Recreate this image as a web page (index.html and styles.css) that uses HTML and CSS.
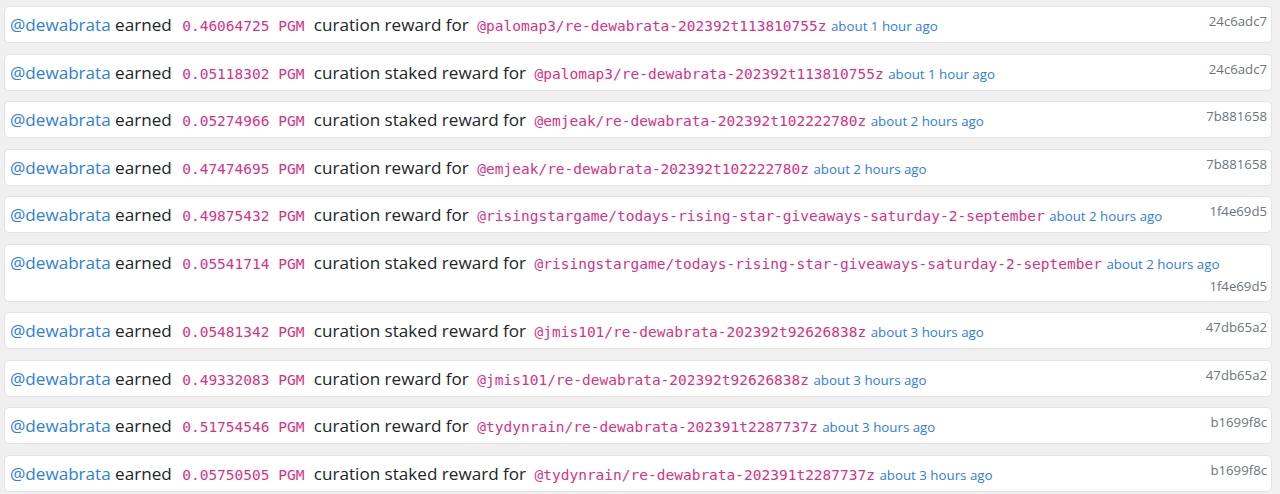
FILE: index.html
```html
<!DOCTYPE html>
<html lang="en">
<head>
  <meta charset="UTF-8">
  <title>dewabrata - curation rewards</title>
  <link rel="stylesheet" href="styles.css">
</head>
<body>
  <!-- 보상 내역 리스트 -->
  <div class="feed">
    <div class="op"><a class="acct" href="#">@dewabrata</a> earned <code class="amt">0.46064725 PGM</code> curation reward for <a class="plink" href="#"><code>@palomap3/re-dewabrata-202392t113810755z</code></a> <a class="ago" href="#">about 1 hour ago</a><span class="trx">24c6adc7</span></div>
    <div class="op"><a class="acct" href="#">@dewabrata</a> earned <code class="amt">0.05118302 PGM</code> curation staked reward for <a class="plink" href="#"><code>@palomap3/re-dewabrata-202392t113810755z</code></a> <a class="ago" href="#">about 1 hour ago</a><span class="trx">24c6adc7</span></div>
    <div class="op"><a class="acct" href="#">@dewabrata</a> earned <code class="amt">0.05274966 PGM</code> curation staked reward for <a class="plink" href="#"><code>@emjeak/re-dewabrata-202392t102222780z</code></a> <a class="ago" href="#">about 2 hours ago</a><span class="trx">7b881658</span></div>
    <div class="op"><a class="acct" href="#">@dewabrata</a> earned <code class="amt">0.47474695 PGM</code> curation reward for <a class="plink" href="#"><code>@emjeak/re-dewabrata-202392t102222780z</code></a> <a class="ago" href="#">about 2 hours ago</a><span class="trx">7b881658</span></div>
    <div class="op"><a class="acct" href="#">@dewabrata</a> earned <code class="amt">0.49875432 PGM</code> curation reward for <a class="plink" href="#"><code>@risingstargame/todays-rising-star-giveaways-saturday-2-september</code></a> <a class="ago" href="#">about 2 hours ago</a><span class="trx">1f4e69d5</span></div>
    <div class="op"><a class="acct" href="#">@dewabrata</a> earned <code class="amt">0.05541714 PGM</code> curation staked reward for <a class="plink" href="#"><code>@risingstargame/todays-rising-star-giveaways-saturday-2-september</code></a> <a class="ago" href="#">about 2 hours ago</a><span class="trx">1f4e69d5</span></div>
    <div class="op"><a class="acct" href="#">@dewabrata</a> earned <code class="amt">0.05481342 PGM</code> curation staked reward for <a class="plink" href="#"><code>@jmis101/re-dewabrata-202392t92626838z</code></a> <a class="ago" href="#">about 3 hours ago</a><span class="trx">47db65a2</span></div>
    <div class="op"><a class="acct" href="#">@dewabrata</a> earned <code class="amt">0.49332083 PGM</code> curation reward for <a class="plink" href="#"><code>@jmis101/re-dewabrata-202392t92626838z</code></a> <a class="ago" href="#">about 3 hours ago</a><span class="trx">47db65a2</span></div>
    <div class="op"><a class="acct" href="#">@dewabrata</a> earned <code class="amt">0.51754546 PGM</code> curation reward for <a class="plink" href="#"><code>@tydynrain/re-dewabrata-202391t2287737z</code></a> <a class="ago" href="#">about 3 hours ago</a><span class="trx">b1699f8c</span></div>
    <div class="op"><a class="acct" href="#">@dewabrata</a> earned <code class="amt">0.05750505 PGM</code> curation staked reward for <a class="plink" href="#"><code>@tydynrain/re-dewabrata-202391t2287737z</code></a> <a class="ago" href="#">about 3 hours ago</a><span class="trx">b1699f8c</span></div>
  </div>
</body>
</html>
```

FILE: styles.css
```css
html, body{
  margin: 0;
  padding: 0;
}

body{
  background-color: #f0f0f0;
  color: #212529;
  font-family: "Open Sans", "Noto Sans", sans-serif;
  font-size: 17.1px;
  line-height: 27px;
}

a{
  color: #2f7de1;
  text-decoration: none;
}

/* 리스트 */
.feed{
  display: flex;
  flex-direction: column;
  gap: 10.5px;
  padding: 6px 8px 0 4px;
}

/* 카드 한줄 */
.op{
  background-color: #fff;
  border: 1px solid #e3e3e3;
  border-radius: 5px;
  padding: 4px 4px 4px 5px;
}

/* 줄높이 안 늘어나게 */
code, .ago{
  line-height: 1;
}

code{
  font-family: "DejaVu Sans Mono", "Liberation Mono", monospace;
  font-size: 14.5px;
  color: #d63384;
}

.amt{
  margin: 0 5px 0 6px;
}

.plink{
  margin-left: 4px;
}

.ago{
  font-size: 13.3px;
}

/* 해시 - 오른쪽 */
.trx{
  float: right;
  font-size: 13.2px;
  line-height: 21px;
  color: #6c757d;
}
```
